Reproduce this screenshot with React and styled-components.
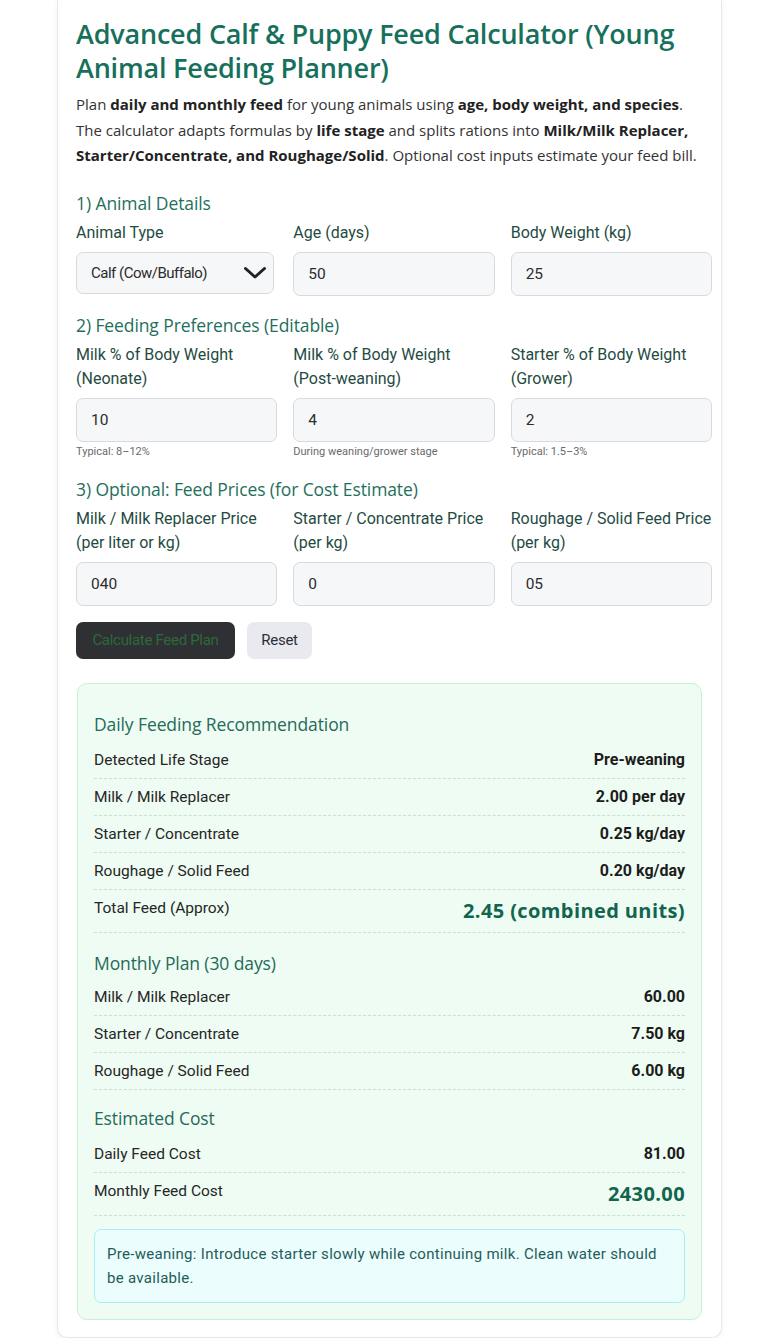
import React from "react";
import styled, { createGlobalStyle } from "styled-components";

const Global = createGlobalStyle`
  * { box-sizing: border-box; }
  html, body { margin: 0; padding: 0; background: #ffffff; }
  body { font-family: "Open Sans", "Noto Sans", sans-serif; color: #2b2b2b; }
`;

const Page = styled.div`
  padding: 0 46px 0 57px;
`;

const Card = styled.main`
  width: 665px;
  background: #fff;
  border: 1px solid #e6e7ea;
  border-top: 0;
  border-radius: 0 0 10px 10px;
  box-shadow: 0 2px 6px rgba(0, 0, 0, 0.05);
  padding: 17px 9px 17px 18px;
`;

const Title = styled.h1`
  margin: 0;
  font-family: "Open Sans", sans-serif;
  font-size: 27px;
  line-height: 34px;
  font-weight: 600;
  color: #16705c;
  letter-spacing: -0.2px;
`;

const Intro = styled.p`
  margin: 7px 0 0;
  font-family: "Open Sans", sans-serif;
  font-size: 15px;
  line-height: 25.5px;
  color: #333;
  letter-spacing: 0;
  white-space: nowrap;
  b { font-weight: 700; color: #222; }
`;

const Section = styled.section`
  margin-top: ${(p) => p.$top || 18}px;
`;

const SectionTitle = styled.h2`
  margin: 0 0 6px;
  font-family: "Open Sans", sans-serif;
  font-size: 17.5px;
  line-height: 24px;
  font-weight: 400;
  color: #1f6f5c;
  letter-spacing: -0.1px;
`;

const Grid = styled.div`
  display: grid;
  grid-template-columns: repeat(3, 1fr);
  column-gap: 16px;
`;

const Field = styled.div`
  display: flex;
  flex-direction: column;
`;

const Label = styled.label`
  font-family: "Roboto", sans-serif;
  font-size: 16px;
  line-height: 24px;
  color: #1f4b42;
  margin-bottom: 7px;
  min-height: ${(p) => (p.$lines || 1) * 24}px;
`;

const Input = styled.input`
  height: 44px;
  width: 100%;
  border: 1px solid #d8dadf;
  border-radius: 7px;
  background: #f6f7f8;
  padding: 0 14px;
  font-family: "Roboto", sans-serif;
  font-size: 15.5px;
  color: #2c2c2c;
  outline: none;
`;

const SelectWrap = styled.div`
  position: relative;
  width: 198px;
`;

const Select = styled.select`
  appearance: none;
  -webkit-appearance: none;
  height: 42px;
  width: 100%;
  border: 1px solid #d8dadf;
  border-radius: 7px;
  background: #f6f7f8;
  padding: 0 14px;
  font-family: "Roboto", sans-serif;
  font-size: 15px;
  letter-spacing: -0.5px;
  color: #2c2c2c;
  outline: none;
`;

const Chevron = styled.svg`
  position: absolute;
  right: 6px;
  top: 50%;
  transform: translateY(-50%);
  pointer-events: none;
`;

const Help = styled.small`
  margin-top: 3px;
  font-family: "Roboto", sans-serif;
  font-size: 11px;
  line-height: 14px;
  color: #6a6a6a;
`;

const Actions = styled.div`
  display: flex;
  gap: 12px;
  margin-top: 16px;
`;

const Button = styled.button`
  height: 37px;
  border: 0;
  border-radius: 7px;
  padding: 0;
  font-family: "Roboto", sans-serif;
  font-size: 15px;
  letter-spacing: -0.3px;
  background: ${(p) => (p.$primary ? "#2f3034" : "#e9eaef")};
  color: ${(p) => (p.$primary ? "#2b6a39" : "#2b2f3a")};
  width: ${(p) => p.$w}px;
`;

const Results = styled.div`
  margin: 24px 10px 0 1px;
  background: #effcf3;
  border: 1.5px solid #c6f1d5;
  border-radius: 10px;
  padding: 28px 16px 16px;
`;

const Group = styled.div`
  margin-top: ${(p) => p.$top || 0}px;
`;

const GroupTitle = styled.h3`
  margin: 0 0 ${(p) => p.$gap || 6}px;
  font-family: "Open Sans", sans-serif;
  font-size: 17.5px;
  line-height: 24px;
  font-weight: 400;
  color: #256a5a;
  letter-spacing: -0.1px;
`;

const Row = styled.div`
  display: flex;
  justify-content: space-between;
  align-items: flex-start;
  padding: 7px 0;
  border-bottom: 1px dashed #c9dfd0;
`;

const RowLabel = styled.span`
  font-family: "Roboto", sans-serif;
  font-size: 15.5px;
  line-height: 22px;
  color: #262626;
`;

const RowValue = styled.span`
  font-family: ${(p) => (p.$big ? '"Open Sans", sans-serif' : '"Roboto", sans-serif')};
  font-size: ${(p) => (p.$big ? 20 : 16)}px;
  line-height: ${(p) => (p.$big ? 28 : 22)}px;
  font-weight: 700;
  letter-spacing: ${(p) => (p.$big ? 0.4 : 0)}px;
  color: ${(p) => (p.$big ? "#11654f" : "#1c1c1c")};
`;

const Note = styled.div`
  margin-top: 13px;
  background: #ecfdfd;
  border: 1.5px solid #a6eef2;
  border-radius: 7px;
  padding: 12px 12px;
  font-family: "Roboto", sans-serif;
  font-size: 15px;
  line-height: 24px;
  letter-spacing: 0.3px;
  color: #1e5c5a;
`;

const daily = [
  ["Detected Life Stage", "Pre-weaning"],
  ["Milk / Milk Replacer", "2.00 per day"],
  ["Starter / Concentrate", "0.25 kg/day"],
  ["Roughage / Solid Feed", "0.20 kg/day"],
];

const monthly = [
  ["Milk / Milk Replacer", "60.00"],
  ["Starter / Concentrate", "7.50 kg"],
  ["Roughage / Solid Feed", "6.00 kg"],
];

export default function App() {
  return (
    <>
      <Global />
      <Page>
        <Card>
          <Title>Advanced Calf &amp; Puppy Feed Calculator (Young Animal Feeding Planner)</Title>
          <Intro>
            Plan <b>daily and monthly feed</b> for young animals using <b>age, body weight, and species</b>.
            <br />
            The calculator adapts formulas by <b>life stage</b> and splits rations into <b>Milk/Milk Replacer,</b>
            <br />
            <b>Starter/Concentrate, and Roughage/Solid</b>. Optional cost inputs estimate your feed bill.
          </Intro>

          <Section $top={22}>
            <SectionTitle>1) Animal Details</SectionTitle>
            <Grid>
              <Field>
                <Label>Animal Type</Label>
                <SelectWrap>
                  <Select defaultValue="calf">
                    <option value="calf">Calf (Cow/Buffalo)</option>
                    <option value="puppy">Puppy</option>
                  </Select>
                  <Chevron width="26" height="14" viewBox="0 0 26 14">
                    <path d="M3.5 2.5 L13 11 L22.5 2.5" fill="none" stroke="#222" strokeWidth="3" strokeLinecap="round" strokeLinejoin="round" />
                  </Chevron>
                </SelectWrap>
              </Field>
              <Field>
                <Label>Age (days)</Label>
                <Input defaultValue="50" />
              </Field>
              <Field>
                <Label>Body Weight (kg)</Label>
                <Input defaultValue="25" />
              </Field>
            </Grid>
          </Section>

          <Section $top={17}>
            <SectionTitle>2) Feeding Preferences (Editable)</SectionTitle>
            <Grid>
              <Field>
                <Label $lines={2}>Milk % of Body Weight (Neonate)</Label>
                <Input defaultValue="10" />
                <Help>Typical: 8–12%</Help>
              </Field>
              <Field>
                <Label $lines={2}>Milk % of Body Weight (Post-weaning)</Label>
                <Input defaultValue="4" />
                <Help>During weaning/grower stage</Help>
              </Field>
              <Field>
                <Label $lines={2}>Starter % of Body Weight (Grower)</Label>
                <Input defaultValue="2" />
                <Help>Typical: 1.5–3%</Help>
              </Field>
            </Grid>
          </Section>

          <Section $top={18}>
            <SectionTitle>3) Optional: Feed Prices (for Cost Estimate)</SectionTitle>
            <Grid>
              <Field>
                <Label $lines={2}>Milk / Milk Replacer Price (per liter or kg)</Label>
                <Input defaultValue="040" />
              </Field>
              <Field>
                <Label $lines={2}>Starter / Concentrate Price (per kg)</Label>
                <Input defaultValue="0" />
              </Field>
              <Field>
                <Label $lines={2}>Roughage / Solid Feed Price (per kg)</Label>
                <Input defaultValue="05" />
              </Field>
            </Grid>
          </Section>

          <Actions>
            <Button $primary $w={159}>Calculate Feed Plan</Button>
            <Button $w={65}>Reset</Button>
          </Actions>

          <Results>
            <Group>
              <GroupTitle>Daily Feeding Recommendation</GroupTitle>
              {daily.map(([l, v]) => (
                <Row key={l}>
                  <RowLabel>{l}</RowLabel>
                  <RowValue>{v}</RowValue>
                </Row>
              ))}
              <Row>
                <RowLabel>Total Feed (Approx)</RowLabel>
                <RowValue $big>2.45 (combined units)</RowValue>
              </Row>
            </Group>

            <Group $top={18}>
              <GroupTitle $gap={4}>Monthly Plan (30 days)</GroupTitle>
              {monthly.map(([l, v]) => (
                <Row key={l}>
                  <RowLabel>{l}</RowLabel>
                  <RowValue>{v}</RowValue>
                </Row>
              ))}
            </Group>

            <Group $top={16}>
              <GroupTitle>Estimated Cost</GroupTitle>
              <Row>
                <RowLabel>Daily Feed Cost</RowLabel>
                <RowValue>81.00</RowValue>
              </Row>
              <Row>
                <RowLabel>Monthly Feed Cost</RowLabel>
                <RowValue $big>2430.00</RowValue>
              </Row>
            </Group>

            <Note>
              Pre-weaning: Introduce starter slowly while continuing milk. Clean water should be available.
            </Note>
          </Results>
        </Card>
      </Page>
    </>
  );
}
